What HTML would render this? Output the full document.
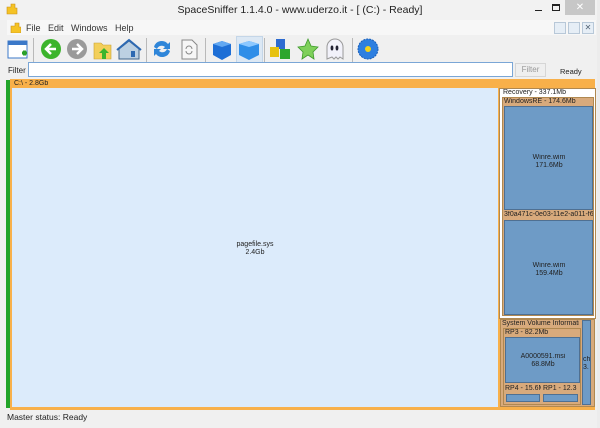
<!DOCTYPE html>
<html><head><meta charset="utf-8"><style>
*{margin:0;padding:0;box-sizing:border-box}
body{width:600px;height:428px;overflow:hidden;background:#f0f0f0;font-family:"Liberation Sans",sans-serif;position:relative}
.a{position:absolute}
.t{font-size:7px;color:#222;white-space:nowrap;overflow:hidden;line-height:8px;padding-left:1px}
.blue{background:#6e9bc6;border:1px solid #4f7092}
.tan{background:#d8aa7c}
.sep{position:absolute;top:38px;width:1px;height:24px;background:#b9b9b9}
</style></head><body>
<!-- title bar -->
<div class="a" style="left:0;top:0;width:600px;height:20px;background:#f2f2f2"></div>
<svg class="a" style="left:6px;top:3px" width="12" height="12"><path d="M1 4h4V1h4v4h2v6H1z" fill="#f5c325" stroke="#c8921a" stroke-width=".6"/></svg>
<div class="a" style="left:0;top:4px;width:600px;text-align:center;font-size:10.5px;color:#222">SpaceSniffer 1.1.4.0 - www.uderzo.it - [ (C:) - Ready]</div>
<div class="a" style="left:535px;top:10px;width:7px;height:1px;background:#222"></div>
<div class="a" style="left:552px;top:4px;width:8px;height:7px;border:1px solid #222;border-top-width:2px"></div>
<div class="a" style="left:565px;top:0;width:30px;height:15px;background:#c7c7c7;color:#fff;font-size:10px;text-align:center;line-height:15px">✕</div>
<!-- menu -->
<div class="a" style="left:7px;top:20px;width:589px;height:15px;background:#f7f7f7"></div>
<svg class="a" style="left:10px;top:22px" width="11" height="11"><path d="M1 4h4V1h4v4h2v6H1z" fill="#f5c325" stroke="#c8921a" stroke-width=".6"/></svg>
<div class="a" style="left:26px;top:23px;font-size:9px;color:#333">File</div>
<div class="a" style="left:48px;top:23px;font-size:9px;color:#333">Edit</div>
<div class="a" style="left:71px;top:23px;font-size:9px;color:#333">Windows</div>
<div class="a" style="left:115px;top:23px;font-size:9px;color:#333">Help</div>
<div class="a" style="left:554px;top:22px;width:12px;height:12px;border:1px solid #b8c8d8;background:#e6eef6"></div>
<div class="a" style="left:568px;top:22px;width:12px;height:12px;border:1px solid #b8c8d8;background:#e6eef6"></div>
<div class="a" style="left:582px;top:22px;width:12px;height:12px;border:1px solid #b8c8d8;background:#e6eef6;font-size:8px;text-align:center;line-height:10px;color:#567">✕</div>
<!-- toolbar -->
<svg class="a" style="left:0;top:36px" width="600" height="28">
<rect x="8" y="5" width="19" height="17" fill="#fff" stroke="#3b78c8"/><rect x="8" y="5" width="19" height="4" fill="#3b78c8"/><path d="M22 17h5M24.5 14.5v5" stroke="#2aa02a" stroke-width="3"/>
<circle cx="51" cy="13" r="10" fill="#3cb42c"/><path d="M56 13h-9M51 8l-5 5 5 5" stroke="#fff" stroke-width="2.5" fill="none"/>
<circle cx="77" cy="13" r="10" fill="#9a9a9a"/><path d="M72 13h9M77 8l5 5-5 5" stroke="#fff" stroke-width="2.5" fill="none"/>
<path d="M94 7h7l2 2h8v14H94z" fill="#f3cf5a" stroke="#c9a030" stroke-width=".6"/><path d="M102 23v-6h-3l5-5 5 5h-3v6z" fill="#3cb42c"/>
<path d="M119 13l10-8 10 8v10h-20z" fill="#bcd0e2" stroke="#40648a"/><path d="M117 14l12-10 12 10" stroke="#2d69b2" stroke-width="2" fill="none"/><rect x="131" y="15" width="4" height="6" fill="#2d69b2"/>
<path d="M154 11a8 8 0 0 1 14-3l2-2v7h-7l2-2a5 5 0 0 0-8 2z" fill="#2f86d9"/><path d="M170 15a8 8 0 0 1-14 3l-2 2v-7h7l-2 2a5 5 0 0 0 8-2z" fill="#2f86d9"/>
<path d="M182 4h10l5 5v14h-15z" fill="#f6f6f6" stroke="#888"/><path d="M186 13a3 3 0 0 1 6 0M192 15a3 3 0 0 1-6 0" stroke="#888" fill="none"/>
<path d="M213 8l9-3 9 3v11l-9 5-9-5z" fill="#1e6fd6"/><path d="M213 8l9-3 9 3-9 3z" fill="#62a8f2"/>
<rect x="236.5" y="0.5" width="26" height="26" fill="#dce8f4" stroke="#c4d6e8"/>
<path d="M239 8l10-3 10 3v11l-10 5-10-5z" fill="#2f8ee8"/><path d="M239 8l10-3 10 3-10 3z" fill="#8cc8ff"/>
<rect x="276" y="3" width="9" height="10" fill="#2d6bd0"/><rect x="270" y="11" width="9" height="10" fill="#e7c20f"/><rect x="280" y="13" width="10" height="10" fill="#2da62d"/>
<path d="M308 3l3 7 7 1-5 5 1 7-6-4-6 4 1-7-5-5 7-1z" fill="#7ed05a" stroke="#3d9a2a" stroke-width=".8"/>
<path d="M327 23V11a8 8 0 0 1 16 0v12l-3-2-2 2-2-2-2 2-2-2z" fill="#f2f2fa" stroke="#999"/><ellipse cx="332" cy="12" rx="1.4" ry="2.5" fill="#223"/><ellipse cx="337" cy="12" rx="1.4" ry="2.5" fill="#223"/>
<circle cx="368" cy="13" r="10" fill="#2d7fe0" stroke="#1a5fb8" stroke-dasharray="2 1"/><circle cx="368" cy="13" r="3" fill="#f3d21d"/>
</svg>
<div class="sep" style="left:33px"></div><div class="sep" style="left:146px"></div><div class="sep" style="left:205px"></div><div class="sep" style="left:264px"></div><div class="sep" style="left:352px"></div>
<!-- filter row -->
<div class="a" style="left:8px;top:66px;font-size:8px;color:#222">Filter</div>
<div class="a" style="left:28px;top:62px;width:485px;height:15px;background:#fff;border:1px solid #7aa6d6"></div>
<div class="a" style="left:515px;top:63px;width:31px;height:14px;border:1px solid #d6d6d6;background:#efefef;font-size:8px;color:#999;text-align:center;line-height:12px">Filter</div>
<div class="a" style="left:560px;top:67px;font-size:7.5px;color:#222">Ready</div>
<!-- main -->
<div class="a" style="left:6px;top:80px;width:4px;height:328px;background:#22a42a"></div>
<div class="a" style="left:10px;top:79px;width:585px;height:331px;background:#f8b04a"></div>
<div class="a t" style="left:13px;top:80px">C:\ - 2.8Gb</div>
<div class="a" style="left:12px;top:88px;width:486px;height:319px;background:#dcebfb"></div>
<div class="a" style="left:12px;top:241px;width:486px;text-align:center;font-size:7px;line-height:8px;color:#222">pagefile.sys<br>2.4Gb</div>
<!-- recovery -->
<div class="a" style="left:499px;top:88px;width:97px;height:231px;background:#fff;border:1px solid #b08850"></div>
<div class="a t" style="left:502px;top:89px">Recovery - 337.1Mb</div>
<div class="a tan" style="left:502px;top:97px;width:92px;height:219px;border:1px solid #b08850"></div>
<div class="a t" style="left:503px;top:98px">WindowsRE - 174.6Mb</div>
<div class="a blue" style="left:504px;top:106px;width:89px;height:104px"></div>
<div class="a t" style="left:504px;top:154px;width:89px;text-align:center">Winre.wim<br>171.6Mb</div>
<div class="a t" style="left:503px;top:211px;width:90px">3f0a471c-0e03-11e2-a011-f6a0</div>
<div class="a blue" style="left:504px;top:220px;width:89px;height:95px"></div>
<div class="a t" style="left:504px;top:262px;width:89px;text-align:center">Winre.wim<br>159.4Mb</div>
<!-- system volume -->
<div class="a tan" style="left:500px;top:319px;width:95px;height:88px;border:1px solid #b08850"></div>
<div class="a t" style="left:501px;top:320px;width:78px">System Volume Informati</div>
<div class="a blue" style="left:582px;top:320px;width:9px;height:85px"></div>
<div class="a t" style="left:582px;top:356px;width:9px">ch<br>3.</div>
<div class="a" style="left:503px;top:328px;width:78px;height:77px;background:#d8aa7c;border:1px solid #b08850"></div>
<div class="a t" style="left:504px;top:329px">RP3 - 82.2Mb</div>
<div class="a blue" style="left:505px;top:337px;width:75px;height:46px"></div>
<div class="a t" style="left:505px;top:353px;width:75px;text-align:center">A0000591.msi<br>68.8Mb</div>
<div class="a t" style="left:504px;top:385px;width:37px">RP4 - 15.6M</div>
<div class="a t" style="left:542px;top:385px;width:37px">RP1 - 12.3</div>
<div class="a blue" style="left:506px;top:394px;width:34px;height:8px"></div>
<div class="a blue" style="left:543px;top:394px;width:35px;height:8px"></div>
<!-- status -->
<div class="a" style="left:7px;top:412px;font-size:8.5px;color:#222">Master status: Ready</div>
<div class="a" style="left:597px;top:0;width:3px;height:428px;background:#ececec"></div>
</body></html>
